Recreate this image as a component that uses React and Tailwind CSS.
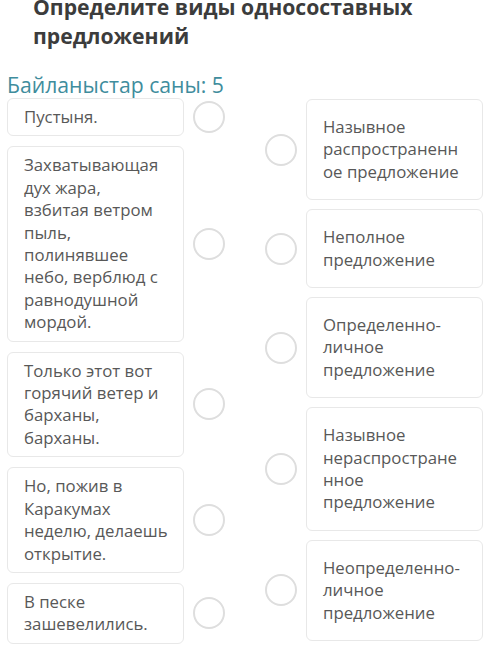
import React from 'react';

const leftItems = [
    'Пустыня.',
    'Захватывающая дух жара, взбитая ветром пыль, полинявшее небо, верблюд с равнодушной мордой.',
    'Только этот вот горячий ветер и барханы, барханы.',
    'Но, пожив в Каракумах неделю, делаешь открытие.',
    'В песке зашевелились.',
];

const rightItems = [
    'Назывное распространенное предложение',
    'Неполное предложение',
    'Определенно-личное предложение',
    'Назывное нераспространенное предложение',
    'Неопределенно-личное предложение',
];

// Empty connector dot next to each card
const Dot = () => (
    <span className="block w-8 h-8 shrink-0 rounded-full border-2 border-[#dedede] bg-white" />
);

const App = () => {
    return (
        <div
            className="w-[500px] h-[661px] overflow-hidden bg-white"
            style={{ fontFamily: '"Open Sans", "Noto Sans", sans-serif' }}
        >
            {/* Task title */}
            <h1 className="pl-[33px] pr-2 -mt-[8px] text-[21.2px] leading-[29px] font-bold text-[#3c3c3c]">
                Определите виды односоставных предложений
            </h1>

            {/* Number of links */}
            <div className="pl-[7px] mt-[22px] text-[21.2px] leading-[26px] text-[#3f8d9d]">
                Байланыстар саны: 5
            </div>

            <div className="flex">
                {/* Sentences */}
                <div className="flex flex-col gap-[10px] pl-[7px]">
                    {leftItems.map((text) => (
                        <div key={text} className="flex items-center">
                            <div className="w-[177px] pl-4 pr-[13px] py-[7px] rounded-md border border-[#e8e8e8] bg-white text-[16.8px] leading-[22.4px] text-[#585858] break-words">
                                {text}
                            </div>
                            <div className="ml-[9px]">
                                <Dot />
                            </div>
                        </div>
                    ))}
                </div>

                {/* Sentence types */}
                <div className="flex flex-col gap-[9px] ml-[40px] mt-[1px]">
                    {rightItems.map((text) => (
                        <div key={text} className="flex items-center">
                            <Dot />
                            <div className="ml-[9px] w-[177px] pl-4 pr-[21px] py-4 rounded-md border border-[#e8e8e8] bg-white text-[16.8px] leading-[22.4px] text-[#585858] break-words">
                                {text}
                            </div>
                        </div>
                    ))}
                </div>
            </div>
        </div>
    );
};

export default App;
